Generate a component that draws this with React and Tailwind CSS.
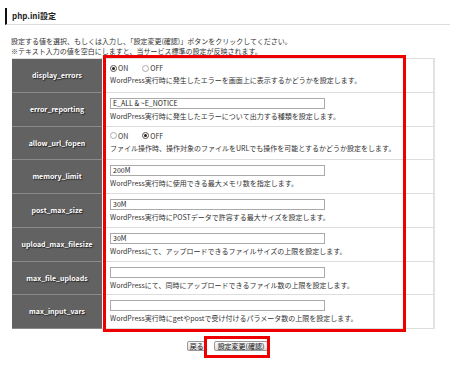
import React from "react";

const F = { fontFamily: '"Noto Sans CJK JP", "Noto Sans", sans-serif' };

function Radio({ checked, label }) {
  return (
    <span className="inline-flex items-center mr-[14px]">
      <span
        className={
          "w-[7px] h-[7px] rounded-full border flex items-center justify-center bg-white " +
          (checked ? "border-[#555]" : "border-[#aaa] bg-[#eee]")
        }
      >
        {checked && <span className="w-[3px] h-[3px] rounded-full bg-[#222]" />}
      </span>
      <span className="ml-[1px]">{label}</span>
    </span>
  );
}

const rows = [
  { name: "display_errors", radio: "on", desc: "WordPress実行時に発生したエラーを画面上に表示するかどうかを設定します。" },
  { name: "error_reporting", value: "E_ALL & ~E_NOTICE", desc: "WordPress実行時に発生したエラーについて出力する種類を設定します。" },
  { name: "allow_url_fopen", radio: "off", desc: "ファイル操作時、操作対象のファイルをURLでも操作を可能とするかどうか設定をします。" },
  { name: "memory_limit", value: "200M", desc: "WordPress実行時に使用できる最大メモリ数を指定します。" },
  { name: "post_max_size", value: "30M", desc: "WordPress実行時にPOSTデータで許容する最大サイズを設定します。" },
  { name: "upload_max_filesize", value: "30M", desc: "WordPressにて、アップロードできるファイルサイズの上限を設定します。" },
  { name: "max_file_uploads", value: "", desc: "WordPressにて、同時にアップロードできるファイル数の上限を設定します。" },
  { name: "max_input_vars", value: "", desc: "WordPress実行時にgetやpostで受け付けるパラメータ数の上限を設定します。" },
];

export default function App() {
  return (
    <div className="relative w-[450px] h-[368px] bg-white text-[#333] overflow-hidden" style={F}>
      {/* title */}
      <div className="pt-[8px] pl-[5px]">
        <div className="flex items-center h-[17px] border-l-[2px] border-[#111] border-b border-b-[#ddd] pl-[5px] text-[8px] font-bold text-[#222] leading-none">
          php.ini設定
        </div>
      </div>
      {/* intro */}
      <div className="pl-[11px] pt-[11px] text-[7px] leading-[10px] text-[#333] whitespace-nowrap">
        <div>設定する値を選択、もしくは入力し、「設定変更(確認)」ボタンをクリックしてください。</div>
        <div>※テキスト入力の値を空白にしますと、当サービス標準の設定が反映されます。</div>
      </div>
      {/* table */}
      <div className="ml-[12px] mt-[2px] w-[423px] border-r-[2px] border-[#e2e2e2] border-t border-t-[#ddd]">
        {rows.map((r) => (
          <div key={r.name} className="flex h-[33.75px]">
            <div className="w-[90px] shrink-0 bg-[#626262] border-b border-[#8a8a8a] flex items-center justify-center text-white font-bold text-[7px] [text-shadow:1px_1px_1px_#222]">
              {r.name}
            </div>
            <div className="flex-1 border-b border-[#ddd] pl-[8px] text-[7px] text-[#333] whitespace-nowrap">
              {r.radio ? (
                <div className="pt-[4px] flex flex-col gap-[2px]">
                  <div className="h-[10px] flex items-center leading-[10px]">
                    <Radio checked={r.radio === "on"} label="ON" />
                    <Radio checked={r.radio === "off"} label="OFF" />
                  </div>
                  <div className="leading-[10px]">{r.desc}</div>
                </div>
              ) : (
                <div className="pt-[5px] flex flex-col gap-[2px]">
                  <div className="w-[215px] h-[11px] border border-[#aaa] bg-white flex items-center px-[2px] leading-none text-[#222]">
                    {r.value}
                  </div>
                  <div className="leading-[10px]">{r.desc}</div>
                </div>
              )}
            </div>
          </div>
        ))}
      </div>
      {/* buttons */}
      <div className="flex justify-center gap-[7px] mt-[12px] pl-[5px] text-[7px] text-[#111]">
        <button className="h-[10px] px-[2px] border border-[#999] rounded-[2px] bg-gradient-to-b from-[#fafafa] to-[#dcdcdc] leading-none flex items-center">
          戻る
        </button>
        <button className="h-[10px] px-[3px] border border-[#999] rounded-[2px] bg-gradient-to-b from-[#fafafa] to-[#dcdcdc] leading-none flex items-center">
          設定変更(確認)
        </button>
      </div>
      {/* red annotations */}
      <div className="absolute left-[103px] top-[55px] w-[303px] h-[277px] border-[3px] border-[#e00] pointer-events-none" />
      <div className="absolute left-[204px] top-[336px] w-[66px] h-[22px] border-[3px] border-[#e00] pointer-events-none" />
    </div>
  );
}
